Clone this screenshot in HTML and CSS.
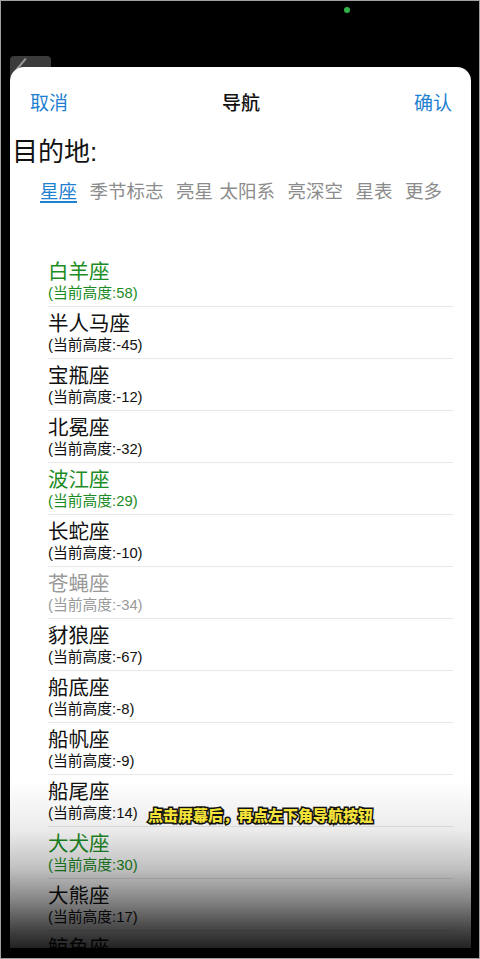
FILE: index.html
```html
<!DOCTYPE html>
<html lang="zh">
<head>
<meta charset="utf-8">
<link rel="stylesheet" href="styles.css">
</head>
<body>
<div class="screen">
  <div class="topbar">
    <span class="dot"></span>
  </div>
  <div class="tool"><span class="stroke"></span></div>
  <div class="card">
    <div class="header">
      <span class="btn">取消</span>
      <span class="title">导航</span>
      <span class="btn">确认</span>
    </div>
    <div class="dest">目的地:</div>
    <div class="tabs">
      <span class="tab active">星座</span>
      <span class="tab">季节标志</span>
      <span class="tab tight">亮星</span>
      <span class="tab">太阳系</span>
      <span class="tab">亮深空</span>
      <span class="tab">星表</span>
      <span class="tab">更多</span>
    </div>
    <ul class="list">
      <li class="row green"><div class="name">白羊座</div><div class="sub">(当前高度:58)</div></li>
      <li class="row"><div class="name">半人马座</div><div class="sub">(当前高度:-45)</div></li>
      <li class="row"><div class="name">宝瓶座</div><div class="sub">(当前高度:-12)</div></li>
      <li class="row"><div class="name">北冕座</div><div class="sub">(当前高度:-32)</div></li>
      <li class="row green"><div class="name">波江座</div><div class="sub">(当前高度:29)</div></li>
      <li class="row"><div class="name">长蛇座</div><div class="sub">(当前高度:-10)</div></li>
      <li class="row gray"><div class="name">苍蝇座</div><div class="sub">(当前高度:-34)</div></li>
      <li class="row"><div class="name">豺狼座</div><div class="sub">(当前高度:-67)</div></li>
      <li class="row"><div class="name">船底座</div><div class="sub">(当前高度:-8)</div></li>
      <li class="row"><div class="name">船帆座</div><div class="sub">(当前高度:-9)</div></li>
      <li class="row"><div class="name">船尾座</div><div class="sub">(当前高度:14)</div></li>
      <li class="row green"><div class="name">大犬座</div><div class="sub">(当前高度:30)</div></li>
      <li class="row"><div class="name">大熊座</div><div class="sub">(当前高度:17)</div></li>
      <li class="row"><div class="name">鲸鱼座</div></li>
    </ul>
  </div>
  <div class="shade"></div>
  <div class="caption">点击屏幕后，再点左下角导航按钮</div>
  <div class="frame"></div>
</div>
</body>
</html>
```
FILE: styles.css
```css
* { box-sizing: border-box; margin: 0; padding: 0; }
html, body { width: 480px; height: 959px; overflow: hidden; background: #000; }
body {
  font-family: "Liberation Sans", "Noto Sans CJK SC", sans-serif;
}
.screen {
  position: relative;
  width: 480px;
  height: 959px;
  background: #000;
  overflow: hidden;
  padding: 0 9px 0 10px;
}
.topbar {
  height: 56px;
  position: relative;
}
.dot {
  position: absolute;
  left: 334px;
  top: 7px;
  width: 6px;
  height: 6px;
  border-radius: 50%;
  background: #2fb34a;
}
.tool {
  position: absolute;
  left: 10px;
  top: 56px;
  width: 41px;
  height: 20px;
  background: #3b3b3b;
  border-radius: 4px 4px 0 0;
}
.tool .stroke {
  position: absolute;
  left: 15px;
  top: 2px;
  width: 2px;
  height: 14px;
  background: #9a9a9a;
  transform: rotate(40deg);
  transform-origin: top left;
}
.card {
  position: relative;
  margin-top: 11px;
  background: #fff;
  border-radius: 14px 14px 0 0;
  height: 881px;
  overflow: hidden;
}
.header {
  height: 68px;
  display: flex;
  align-items: center;
  justify-content: space-between;
  padding: 0 19px 0 20px;
  font-size: 19px;
}
.btn { color: #1f7fd1; }
.title { color: #111; font-family: "Noto Sans CJK SC", sans-serif; font-weight: 500; }
.dest {
  font-size: 26px;
  line-height: 34px;
  color: #111;
  padding-left: 2px;
}
.tabs {
  margin-top: 8px;
  height: 26px;
  display: flex;
  align-items: center;
  gap: 12.5px;
  padding-left: 30px;
  font-size: 18.5px;
  color: #8c8c8c;
  white-space: nowrap;
}
.tab.tight { margin-right: -6px; }
.tab.active {
  color: #1f7fd1;
  text-decoration: underline;
  text-underline-offset: 3px;
  text-decoration-thickness: 2px;
}
.list {
  list-style: none;
  margin: 52px 18px 0 38px;
}
.row {
  height: 52px;
  padding-top: 5px;
  border-bottom: 1px solid #e8e8e8;
  color: #111;
}
.name {
  font-size: 20.5px;
  line-height: 24px;
}
.sub {
  font-size: 14.8px;
  line-height: 18px;
}
.row.green { color: #1c8c24; }
.row.gray { color: #9a9a9a; }
.shade {
  position: absolute;
  left: 0;
  top: 780px;
  width: 480px;
  height: 179px;
  background: linear-gradient(to bottom, rgba(0,0,0,0) 0%, rgba(0,0,0,0.03) 11%, rgba(0,0,0,0.08) 28%, rgba(0,0,0,0.25) 50%, rgba(0,0,0,0.48) 67%, rgba(0,0,0,0.74) 84%, rgba(0,0,0,0.9) 97%, rgba(0,0,0,0.92) 100%);
}
.caption {
  position: absolute;
  left: 148px;
  top: 804px;
  font-family: "Noto Sans CJK SC", sans-serif;
  font-weight: 900;
  font-size: 15px;
  line-height: 22px;
  color: #f3e23a;
  -webkit-text-stroke: 3px #111;
  paint-order: stroke fill;
}
.frame {
  position: absolute;
  inset: 0;
  border: 1px solid #a0a0a0;
  pointer-events: none;
}
```
